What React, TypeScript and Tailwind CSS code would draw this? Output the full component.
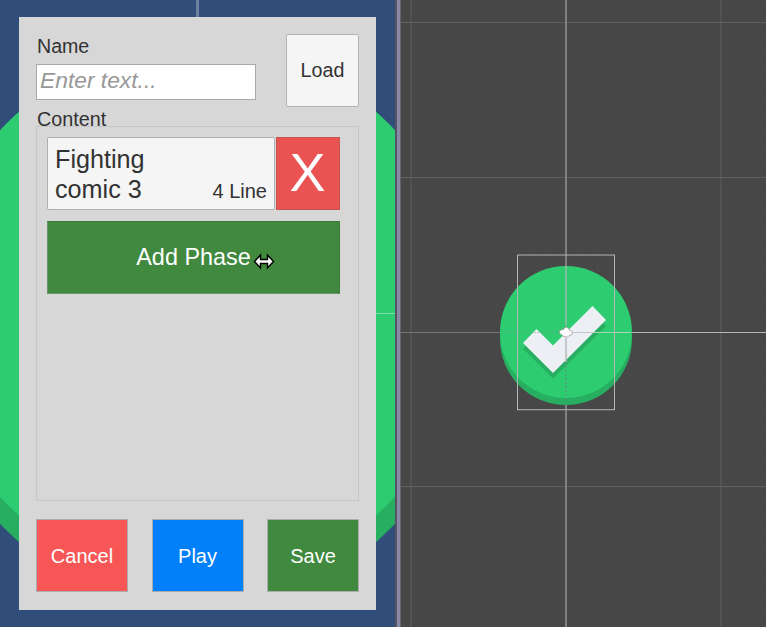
import type { ReactNode } from 'react';

const minorX = Array.from({ length: 24 }, (_, i) => 10.5 + i * 15.5);
const minorY = Array.from({ length: 41 }, (_, i) => 6.5 + i * 15.5);

function GameBackdrop() {
  return (
    <svg className="absolute inset-0" width="395" height="627">
      <circle cx="197.5" cy="340.3" r="269.5" fill="#27ae60" />
      <circle cx="197.5" cy="313.5" r="269.5" fill="#2ecc71" />
      <rect x="196" y="0" width="3" height="18" fill="#6c7f9f" />
      <rect x="376" y="313" width="19" height="1" fill="#82e0aa" />
    </svg>
  );
}

function SceneView() {
  return (
    <svg className="block" width="366" height="627">
      <g fill="#494949">
        {minorX.map((x) => (
          <rect key={x} x={Math.round(x)} y="0" width="1" height="627" />
        ))}
        {minorY.map((y) => (
          <rect key={y} x="0" y={Math.round(y)} width="366" height="1" />
        ))}
      </g>
      <g fill="#535353">
        <rect x="10" y="0" width="2" height="627" />
        <rect x="320" y="0" width="2" height="627" />
      </g>
      <g fill="#606060">
        <rect x="0" y="22" width="366" height="1" />
        <rect x="0" y="177" width="366" height="1" />
        <rect x="0" y="486" width="366" height="1" />
      </g>
      <rect x="165" y="0" width="2" height="627" fill="#808080" />
      <rect x="0" y="332" width="366" height="1" fill="#777777" />
      <rect x="214" y="332" width="152" height="1" fill="#b4b4b4" />
      <rect x="0" y="0" width="1" height="627" fill="#65636f" />
      <circle cx="166" cy="339" r="66" fill="#27ae60" />
      <circle cx="166" cy="332" r="66" fill="#2ecc71" />
      <path d="M123 348.5 L136.5 335 L153 351 L192.5 312 L206 326 L153 378.5 Z" fill="#27ae60" />
      <path d="M123 343 L136.5 329 L153 345.5 L192.5 306 L206 320 L153 373 Z" fill="#ecf0f5" />
      <rect x="165" y="266" width="2" height="60" fill="#a8b8b0" fillOpacity="0.65" />
      <rect x="165" y="338" width="2" height="24" fill="#b4b8ba" fillOpacity="0.75" />
      <path d="M101 332.5 H158" stroke="#79927f" strokeOpacity=".5" strokeDasharray="2 1" />
      <path d="M172 332.5 H231" stroke="#a9d5ba" />
      <path d="M172 332.5 H193" stroke="#c4c8ca" />
      <path d="M166 362 V404" stroke="#66897a" strokeOpacity=".5" strokeWidth="2" strokeDasharray="2 2" />
      <rect x="117.5" y="255" width="97" height="154.7" fill="none" stroke="#b5b5b5" />
      <path d="M159.5 333 Q158.8 330.5 161 330 Q162.3 329.2 163.3 330 Q163.8 327.2 166.3 327.3 Q169 327.3 169.3 330 Q172.6 330.5 172.5 333 Q172.3 335.5 169.3 335.5 Q168 337.8 165 336.8 Q162.4 336.8 161.8 334.5 Q160 334.5 159.5 333 Z" fill="#fcfcfc" stroke="#9a9d9b" strokeWidth=".8" />
    </svg>
  );
}

function ActionButton({ color, children }: { color: string; children: ReactNode }) {
  return (
    <button className={`flex h-[73px] w-[92px] items-center justify-center border border-black/20 bg-clip-padding pt-px text-[20px] leading-none text-white ${color}`}>
      {children}
    </button>
  );
}

function PhaseEditor() {
  return (
    <section className="relative ml-[19px] mt-[17px] flex h-[593px] w-[357px] flex-col bg-[#d7d7d7] px-[17px] pt-[17px] text-[#323232]">
      <div className="flex justify-between">
        <div className="w-[220px]">
          <label className="block h-[30px] pl-px pt-px text-[19.6px] leading-[22px]">Name</label>
          <input
            placeholder="Enter text..."
            className="block h-[36px] w-[220px] border border-[#a8a8a8] bg-white pb-[4px] pl-[3px] text-[22.8px] italic leading-[28px] outline-none placeholder:text-[#989898] placeholder:opacity-100"
          />
        </div>
        <button className="flex h-[73px] w-[73px] items-center justify-center rounded-[2px] border border-[#b4b4b4] bg-[#f5f5f5] pt-px text-[19.7px] leading-none">
          Load
        </button>
      </div>
      <h2 className="h-[19px] pl-px pt-px text-[19.8px] leading-[22px]">Content</h2>
      <div className="flex h-[375px] w-[323px] flex-col border border-[#c7c7c7] px-[10px] pt-[10px]">
        <div className="flex gap-px">
          <div className="flex h-[73px] w-[228px] items-end justify-between rounded-[2px] border border-[#b0b0b0] bg-[#f5f5f5] pl-[7px] pr-[7px]">
            <div className="w-[110px] self-start pt-[6px] text-[25.2px] leading-[30px]">Fighting comic 3</div>
            <div className="pb-[7px] text-[20px] leading-[22px]">4 Line</div>
          </div>
          <button className="flex h-[73px] w-[64px] items-center justify-center border border-[#c45353] bg-[#eb5252] pb-[3px] pr-px text-[54px] leading-none text-white">
            X
          </button>
        </div>
        <button className="mt-[11px] flex h-[73px] w-[293px] items-center justify-center border border-[#6c946a] border-r-[#3b7a38] border-t-[#3b7a38] bg-[#40893e] text-[23.4px] leading-none text-white">
          Add Phase
        </button>
      </div>
      <div className="mt-[18px] flex w-[323px] justify-between">
        <ActionButton color="bg-[#f75656]">Cancel</ActionButton>
        <ActionButton color="bg-[#0080fa]">Play</ActionButton>
        <ActionButton color="bg-[#40893e]">Save</ActionButton>
      </div>
    </section>
  );
}

export default function App() {
  return (
    <main className="relative flex h-[627px] w-[766px] overflow-hidden font-['Liberation_Sans',Arial,sans-serif]">
      <div className="relative w-[395px] shrink-0 bg-[#314d79]">
        <GameBackdrop />
        <PhaseEditor />
      </div>
      <div className="w-[5px] shrink-0 border-l-2 border-l-[#565464] bg-[#8b8aa5]" />
      <div className="w-[366px] shrink-0 bg-[#474747]">
        <SceneView />
      </div>
      <svg className="absolute left-[253px] top-[253px]" width="22" height="17">
        <path d="M1.5 8.5 L7.5 2 V6.5 H14.5 V2 L20.5 8.5 L14.5 15 V10.5 H7.5 V15 Z" fill="white" stroke="black" strokeWidth="1.4" />
      </svg>
    </main>
  );
}
